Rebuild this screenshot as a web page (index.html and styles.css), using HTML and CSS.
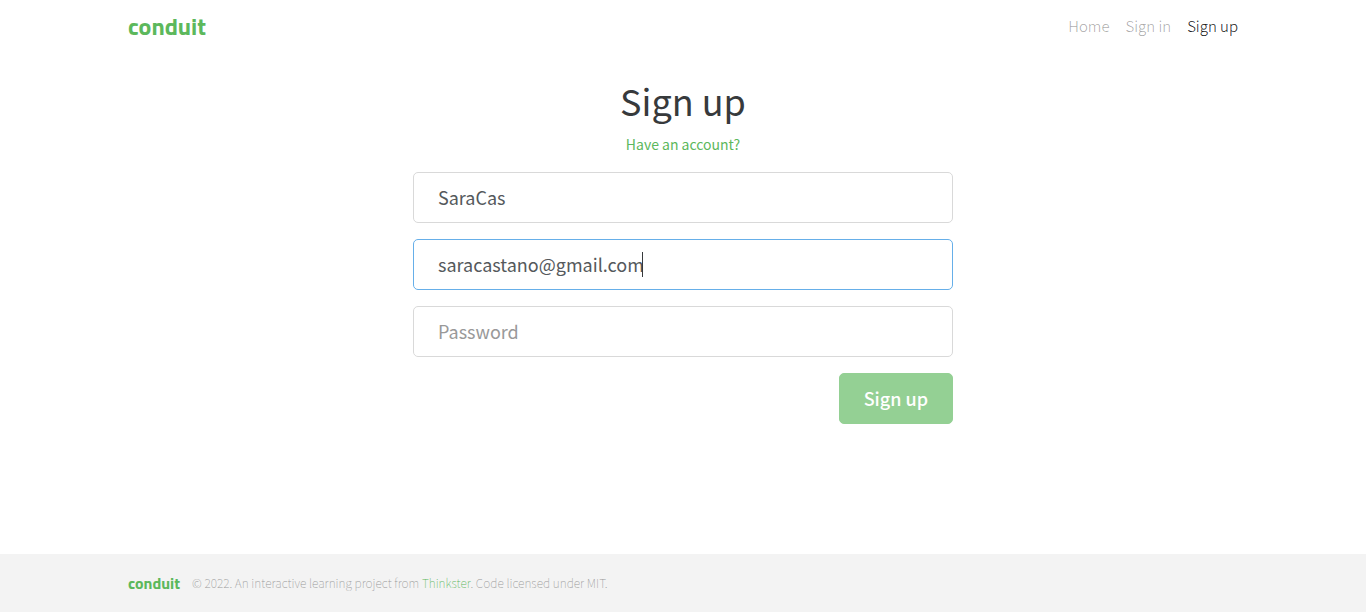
FILE: index.html
```
<!DOCTYPE html>
<html lang="en">
<head>
<meta charset="utf-8">
<title>Sign up — Conduit</title>
<link rel="stylesheet" href="styles.css">
</head>
<body>
<nav class="navbar">
  <div class="container navbar-inner">
    <a class="brand" href="#">conduit</a>
    <ul class="nav">
      <li><a class="nav-link" href="#">Home</a></li>
      <li><a class="nav-link" href="#">Sign in</a></li>
      <li><a class="nav-link active" href="#">Sign up</a></li>
    </ul>
  </div>
</nav>
<main class="auth-page">
  <h1 class="title">Sign up</h1>
  <p class="switch"><a href="#">Have an account?</a></p>
  <form class="form">
    <input class="field" type="text" aria-label="Username" placeholder="Username" value="SaraCas">
    <div class="field-wrap">
      <input class="field focused" type="text" inputmode="email" aria-label="Email" placeholder="Email" value="saracastano@gmail.com">
      <div class="caret-layer" aria-hidden="true"><span class="caret"></span></div>
    </div>
    <input class="field" type="password" aria-label="Password" placeholder="Password">
    <button class="submit" type="submit" disabled>Sign up</button>
  </form>
</main>
<footer class="footer">
  <div class="container footer-inner">
    <a class="footer-brand" href="#">conduit</a>
    <span class="attribution">© 2022. An interactive learning project from <a href="#">Thinkster</a>. Code licensed under MIT.</span>
  </div>
</footer>
</body>
</html>
```
FILE: styles.css
```
* { box-sizing: border-box; }

body {
  margin: 0;
  min-height: 100vh;
  display: flex;
  flex-direction: column;
  background: #fff;
  color: #373a3c;
  font-family: "Source Sans Pro", "Noto Sans CJK SC", sans-serif;
  font-size: 14px;
  line-height: 24px;
}

a { color: #5cb85c; text-decoration: none; }

.container {
  width: 100%;
  max-width: 1140px;
  margin: 0 auto;
  padding: 0 15px;
}

.navbar { padding: 8px 0; }

.navbar-inner {
  display: flex;
  align-items: center;
  justify-content: space-between;
}

.brand,
.footer-brand {
  font-family: "Titillium Web", "Noto Sans CJK SC", sans-serif;
  font-weight: 700;
}

.brand { font-size: 24px; line-height: 36px; }

.nav {
  display: flex;
  gap: 16px;
  margin: 0;
  padding: 0;
  list-style: none;
  font-size: 15px;
  font-weight: 300;
}

.nav-link { color: rgba(0, 0, 0, .35); }
.nav-link.active { color: rgba(0, 0, 0, .9); }

.auth-page {
  flex: 1;
  width: 100%;
  max-width: 570px;
  margin: 0 auto;
  padding: 26px 15px;
}

.title {
  margin: 0 0 10px;
  font-size: 36px;
  font-weight: 400;
  line-height: 44px;
  text-align: center;
}

.switch { margin: 0 0 16px; text-align: center; }

.form { display: flex; flex-direction: column; gap: 16px; }

.field {
  display: block;
  width: 100%;
  height: 51px;
  padding: 0 24px 2px;
  border: 1px solid #d9d9d9;
  border-radius: 5px;
  outline: 0;
  background: #fff;
  color: #55595c;
  font: inherit;
  font-size: 18px;
}

.field::placeholder { color: #999; opacity: 1; }
.field.focused { border-color: #66afe9; }

.field-wrap { position: relative; }

.caret-layer {
  position: absolute;
  top: 13px;
  left: 229px;
  pointer-events: none;
}

.caret {
  display: block;
  width: 1px;
  height: 25px;
  background: #373a3c;
}

.submit {
  align-self: flex-end;
  height: 51px;
  padding: 0 24px 2px;
  border: 1px solid #5cb85c;
  border-radius: 5px;
  background: #5cb85c;
  color: #fff;
  font: inherit;
  font-size: 18px;
  font-weight: 500;
  opacity: .65;
}

.footer { padding: 17px 0; background: #f3f3f3; }

.footer-inner { display: flex; align-items: center; gap: 12px; }

.footer-brand { font-size: 16px; }

.attribution { color: #999; font-size: 12px; font-weight: 100; }
```
